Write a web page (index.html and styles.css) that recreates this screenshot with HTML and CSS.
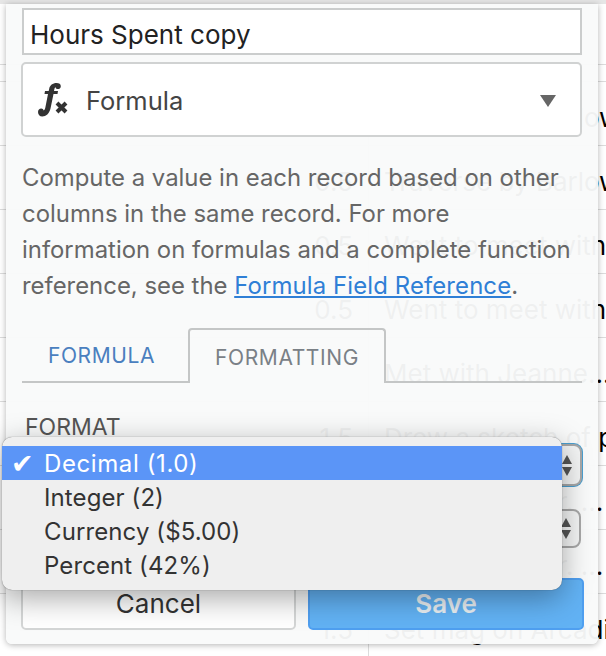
FILE: index.html
```html
<!DOCTYPE html>
<html lang="en">
<head>
    <meta charset="UTF-8">
    <meta name="viewport" content="width=device-width, initial-scale=1.0">
    <title>Hours Spent copy</title>
    <link rel="stylesheet" href="styles.css">
</head>
<body>
    <div class="table">
        <div class="row row-a"></div>
        <div class="row row-b"></div>
        <div class="row"><span class="hours"></span><span class="notes">Traverse by Barlow</span></div>
        <div class="row"><span class="hours">0.5</span><span class="notes">Traverse by Barlow</span></div>
        <div class="row"><span class="hours">0.5</span><span class="notes">Went to meet with</span></div>
        <div class="row"><span class="hours">0.5</span><span class="notes">Went to meet with</span></div>
        <div class="row"><span class="hours"></span><span class="notes">Met with Jeanne...</span></div>
        <div class="row"><span class="hours">1.5</span><span class="notes">Drew a sketch of p</span></div>
        <div class="row"><span class="hours"></span><span class="notes notes-end">Dr. ...</span></div>
        <div class="row"><span class="hours"></span><span class="notes notes-end">Dr. ...</span></div>
        <div class="row"><span class="hours">1.5</span><span class="notes">Set mag on Arcadi</span></div>
    </div>

    <div class="popup">
        <input class="name-input" type="text" value="Hours Spent copy">

        <div class="type-select">
            <svg class="fx-icon" width="30" height="34" viewBox="0 0 30 34">
                <path d="M0 29c0-2 1.500-3.500 3.200-3.500 1.300 0 2.200.8 2.500 2 .8-.3 1.300-1.300 1.700-3.200L10 11H6.500l.5-3h3.700l.5-2.200C11.700 2.300 14.800 0 18.500 0c2.700 0 4.300 1.200 4.300 3.200 0 1.700-1.200 2.900-2.800 2.900-1.300 0-2.200-.7-2.500-1.900-.6.200-1 1-1.200 2.200L16 8h4l-.5 3h-4l-3 14.500C11.400 30.500 8 33.500 4.300 33.500 1.700 33.500 0 31.600 0 29z" fill="#333"/>
                <path d="M19 20l9 9M28 20l-9 9" stroke="#333" stroke-width="4" fill="none"/>
            </svg>
            <span class="type-label">Formula</span>
            <svg class="type-arrow" width="16" height="12" viewBox="0 0 16 12"><path d="M0 0h16l-8 12z" fill="#666"/></svg>
        </div>

        <p class="description">Compute a value in each record based on other columns in the same record. For more information on formulas and a complete function reference, see the <a href="#">Formula Field Reference</a>.</p>

        <div class="tabs">
            <span class="tab">FORMULA</span>
            <span class="tab tab-active">FORMATTING</span>
            <span class="tab-rest"></span>
        </div>

        <div class="field-label">FORMAT</div>
        <div class="fake-select fake-select-focus">
            <span class="stepper"><i class="up"></i><i class="down"></i></span>
        </div>
        <div class="fake-select fake-select-plain">
            <span class="stepper"><i class="up"></i><i class="down"></i></span>
        </div>

        <div class="buttons">
            <button class="btn btn-cancel">Cancel</button>
            <button class="btn btn-save">Save</button>
        </div>
    </div>

    <ul class="menu">
        <li class="menu-item selected"><span class="check">✔</span>Decimal (1.0)</li>
        <li class="menu-item">Integer (2)</li>
        <li class="menu-item">Currency ($5.00)</li>
        <li class="menu-item">Percent (42%)</li>
    </ul>
</body>
</html>
```

FILE: styles.css
```css
html, body {
    margin: 0;
    height: 656px;
    overflow: hidden;
    background: #fff;
}
body {
    position: relative;
    font-family: Inter, "Liberation Sans", sans-serif;
}

/* table behind the popup */
.table {
    border-top: 4px solid #e6e6e6;
}
.row {
    display: flex;
    height: 63px;
    border-bottom: 1px solid #dcdcdc;
    font-size: 26px;
    color: #000;
    white-space: nowrap;
    overflow: hidden;
}
.row-a { height: 60px; }
.row-b { height: 16px; }
.hours {
    flex: none;
    width: 353px;
    padding-right: 15px;
    text-align: right;
    border-right: 1px solid #dcdcdc;
    line-height: 72px;
}
.notes {
    flex: none;
    padding-left: 15px;
    line-height: 72px;
}
.notes-end {
    padding-left: 170px;
}

/* popup */
.popup {
    position: absolute;
    left: 6px;
    top: 4px;
    width: 592px;
    height: 640px;
    box-sizing: border-box;
    padding: 4px 16px 0 15px;
    background: rgba(249, 250, 250, 0.96);
    border-radius: 0 0 6px 6px;
    box-shadow: 0 1px 6px rgba(0, 0, 0, 0.3);
}
.name-input {
    display: block;
    width: 560px;
    height: 47px;
    box-sizing: border-box;
    margin-left: 1px;
    padding: 5px 6px 0;
    border: 2px solid #cbcdcd;
    background: #fff;
    font-family: inherit;
    font-size: 26px;
    color: #222;
    outline: none;
}
.type-select {
    display: flex;
    align-items: center;
    height: 75px;
    box-sizing: border-box;
    margin-top: 7px;
    padding: 2px 24px 0 15px;
    border: 2px solid #d0d2d2;
    border-radius: 5px;
    background: #fff;
}
.fx-icon {
    margin-top: -1px;
}
.type-label {
    margin-left: 18px;
    font-size: 25.500px;
    color: #444;
}
.type-arrow {
    margin-left: auto;
}
.description {
    margin: 23px 0 0 1px;
    font-size: 23.900px;
    line-height: 36px;
    color: #666;
}
.description a {
    color: #2f7fd6;
    letter-spacing: 0.13px;
}
.tabs {
    display: flex;
    margin: 24px 0 0 1px;
    height: 55px;
}
.tab {
    box-sizing: border-box;
    width: 166px;
    padding: 15px 7px 0 0;
    text-align: center;
    font-size: 21px;
    letter-spacing: 0.6px;
    color: #4a7fbf;
    border-bottom: 2px solid #c4c6c6;
}
.tab-active {
    width: 198px;
    padding-right: 0;
    color: #7a8086;
    border: 2px solid #c4c6c6;
    border-bottom: 0;
    border-radius: 4px 4px 0 0;
}
.tab-rest {
    flex: 1;
    border-bottom: 2px solid #c4c6c6;
}
.field-label {
    margin: 31px 0 0 4px;
    font-size: 23px;
    line-height: 26px;
    color: #555;
}
.fake-select {
    display: flex;
    justify-content: flex-end;
    align-items: center;
    box-sizing: border-box;
    background: #f4f5f5;
    border-radius: 8px;
    padding-right: 8px;
}
.fake-select-focus {
    height: 42px;
    margin: 4px 0 0;
    border: 2px solid #a8a8a8;
    box-shadow: 0 0 0 1px #4a9fd0;
}
.fake-select-plain {
    height: 39px;
    margin: 23px 1px 0 0;
    border: 2px solid #a8a8a8;
}
.stepper {
    display: flex;
    flex-direction: column;
    gap: 3px;
}
.stepper i {
    display: block;
    width: 0;
    height: 0;
    border-left: 5px solid transparent;
    border-right: 5px solid transparent;
}
.stepper .up { border-bottom: 9px solid #555; }
.stepper .down { border-top: 9px solid #555; }
.buttons {
    display: flex;
    justify-content: space-between;
    margin: 30px -2px 0 0;
}
.btn {
    height: 52px;
    box-sizing: border-box;
    border-radius: 5px;
    font-family: inherit;
    font-size: 26px;
    padding: 0 0 2px;
}
.btn-cancel {
    width: 275px;
    background: #fff;
    border: 2px solid #d4d6d6;
    color: #333;
}
.btn-save {
    width: 276px;
    background: #62b2f4;
    border: 2px solid #4f9ff0;
    color: #e9eff3;
    font-weight: 600;
}

/* native-looking dropdown list */
.menu {
    position: absolute;
    left: 2px;
    top: 437px;
    width: 560px;
    height: 153px;
    box-sizing: border-box;
    margin: 0;
    padding: 9px 0;
    list-style: none;
    background: #efefef;
    border-radius: 10px;
    box-shadow: 0 0 1px rgba(0, 0, 0, 0.6), 0 8px 30px rgba(0, 0, 0, 0.35);
}
.menu-item {
    height: 34px;
    padding-left: 42px;
    font-size: 24px;
    letter-spacing: 0.1px;
    line-height: 36px;
    color: #333;
}
.selected {
    position: relative;
    background: #5b95f7;
    color: #fff;
    letter-spacing: 0.6px;
}
.check {
    position: absolute;
    left: 9px;
    font-family: "DejaVu Sans", sans-serif;
    font-size: 27px;
}
```
